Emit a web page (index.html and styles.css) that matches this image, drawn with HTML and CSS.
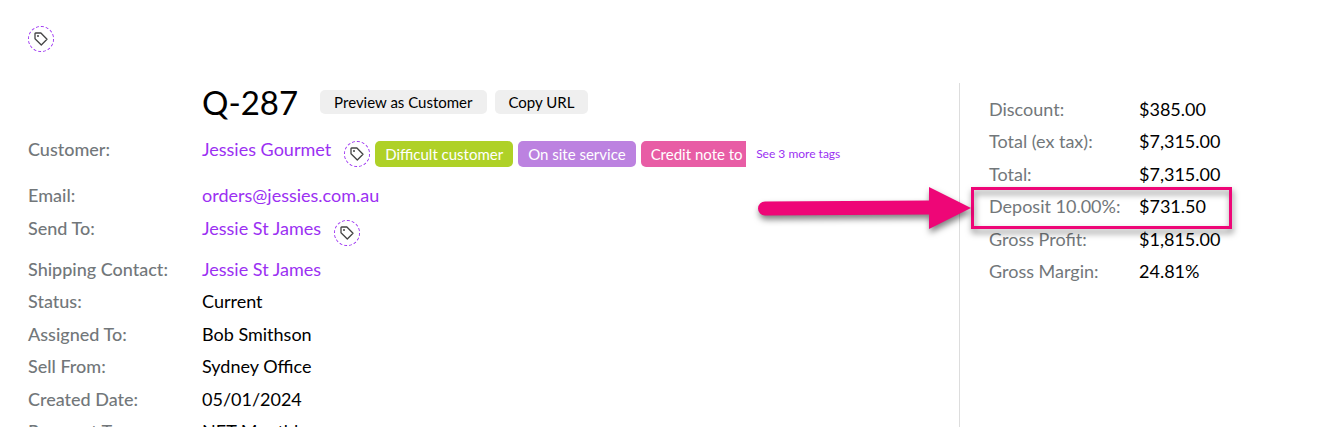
FILE: index.html
```html
<!DOCTYPE html>
<html lang="en">
<head>
<meta charset="utf-8">
<meta name="viewport" content="width=device-width, initial-scale=1">
<title>Quote Q-287</title>
<link rel="stylesheet" href="styles.css">
</head>
<body>
<svg width="0" height="0" class="sprite" aria-hidden="true">
  <symbol id="tag" viewBox="0 0 14 14">
    <path d="M1 1.6V6.8L7.3 13L13 7.3L6.9 1H1.6Q1 1 1 1.6Z" fill="none" stroke="#444" stroke-width="1.3" stroke-linejoin="round"/>
    <circle cx="4" cy="4" r="1" fill="#444"/>
  </symbol>
</svg>
<header class="toolbar">
  <button class="tag-button" type="button" aria-label="Add tag"><svg class="tag-icon"><use href="#tag"/></svg></button>
</header>
<main class="quote">
  <section class="details">
    <div class="heading">
      <h1 class="title">Q-287</h1>
      <button class="action" type="button">Preview as Customer</button>
      <button class="action" type="button">Copy URL</button>
    </div>
    <dl class="fields">
      <div class="field field-customer">
        <dt>Customer:</dt>
        <dd><a href="#">Jessies Gourmet</a>
          <div class="tagging">
            <button class="tag-button" type="button" aria-label="Add customer tag"><svg class="tag-icon"><use href="#tag"/></svg></button>
            <div class="tags">
              <span class="tag tag-green">Difficult customer</span>
              <span class="tag tag-purple">On site service</span>
              <span class="tag tag-pink">Credit note to</span>
            </div>
            <a class="more" href="#">See 3 more tags</a>
          </div>
        </dd>
      </div>
      <div class="field field-tall"><dt>Email:</dt><dd><a href="#">orders@jessies.com.au</a></dd></div>
      <div class="field field-send">
        <dt>Send To:</dt>
        <dd><a href="#">Jessie St James</a>
          <div class="tagging">
            <button class="tag-button" type="button" aria-label="Add contact tag"><svg class="tag-icon"><use href="#tag"/></svg></button>
          </div>
        </dd>
      </div>
      <div class="field"><dt>Shipping Contact:</dt><dd><a href="#">Jessie St James</a></dd></div>
      <div class="field field-tall"><dt>Status:</dt><dd>Current</dd></div>
      <div class="field"><dt>Assigned To:</dt><dd>Bob Smithson</dd></div>
      <div class="field field-tall"><dt>Sell From:</dt><dd>Sydney Office</dd></div>
      <div class="field"><dt>Created Date:</dt><dd>05/01/2024</dd></div>
      <div class="field"><dt>Payment Terms:</dt><dd>NET Monthly</dd></div>
    </dl>
  </section>
  <aside class="summary">
    <dl class="totals">
      <div class="total"><dt>Discount:</dt><dd>$385.00</dd></div>
      <div class="total total-tall"><dt>Total (ex tax):</dt><dd>$7,315.00</dd></div>
      <div class="total"><dt>Total:</dt><dd>$7,315.00</dd></div>
      <div class="total total-tall highlighted"><dt>Deposit 10.00%:</dt><dd>$731.50</dd>
        <span class="frame"></span>
        <svg class="arrow" width="213" height="42" viewBox="0 0 213 42" aria-hidden="true">
          <path d="M7 14.5L171 13.5V0L213 21L171 42V27.5L7 28.5A7 7 0 0 1 7 14.5Z" fill="#ee0677"/>
        </svg>
      </div>
      <div class="total"><dt>Gross Profit:</dt><dd>$1,815.00</dd></div>
      <div class="total"><dt>Gross Margin:</dt><dd>24.81%</dd></div>
    </dl>
  </aside>
</main>
</body>
</html>
```
FILE: styles.css
```css
* { box-sizing: border-box; }

body {
  margin: 0;
  height: 100vh;
  overflow: hidden;
  display: flex;
  flex-direction: column;
  background: #fff;
  color: #000;
  font: 18px/32px Lato, "Liberation Sans", sans-serif;
}

a { color: #9b30f2; text-decoration: none; }
button { font-family: inherit; cursor: pointer; }
dl, dd, h1 { margin: 0; }
.sprite { position: absolute; }

.toolbar { flex: none; padding: 26px 28px 31px; display: flex; }

.tag-button {
  flex: none;
  display: flex;
  align-items: center;
  justify-content: center;
  width: 26px;
  height: 26px;
  padding: 0;
  border: 1px dashed #9b30f2;
  border-radius: 50%;
  background: transparent;
}
.tag-icon { width: 14px; height: 14px; }

.quote {
  flex: 1;
  min-height: 0;
  display: grid;
  grid-template-columns: minmax(0, 1fr) 369px;
}

.details { padding-left: 28px; }
.heading {
  display: flex;
  align-items: center;
  gap: 8px;
  padding-left: 174px;
  height: 38px;
  margin-bottom: 12px;
}
.title { font-size: 33px; font-weight: 400; line-height: 38px; margin-right: 14px; }
.action {
  height: 24px;
  padding: 0 14px;
  border: 0;
  border-radius: 5px;
  background: #efefef;
  color: #000;
  font-size: 15px;
  line-height: 24px;
}

.field { display: grid; grid-template-columns: 174px minmax(0, 1fr); height: 32px; }
.field-tall { height: 33px; }
.field-customer { height: 46px; }
.field-send { height: 41px; }
.field dt { color: #72777a; font-weight: 500; }
.field dd { display: flex; align-items: flex-start; gap: 13px; white-space: nowrap; }

.tagging { display: flex; align-items: center; gap: 5px; padding-top: 8px; }
.tags { display: flex; gap: 5px; width: 371px; overflow: hidden; }
.tag {
  flex: none;
  height: 26px;
  padding: 0 10px;
  border-radius: 5px;
  color: #fff;
  font-size: 15px;
  line-height: 26px;
}
.tag-green { background: #afd127; }
.tag-purple { background: #bc82e0; }
.tag-pink { background: #e85da5; }
.more { font-size: 12px; line-height: 26px; padding-left: 5px; }

.summary { border-left: 1px solid #ddd; padding: 10px 0 0 29px; }
.total { display: grid; grid-template-columns: 150px 1fr; height: 32px; }
.total-tall { height: 33px; }
.total dt { color: #72777a; }

.highlighted { position: relative; }
.frame {
  position: absolute;
  left: -18px;
  top: -3px;
  width: 261px;
  height: 42px;
  border: 3px solid #ee0677;
  filter: drop-shadow(1px 4px 3px rgba(0, 0, 0, .5));
}
.arrow {
  position: absolute;
  right: 100%;
  margin-right: 18px;
  top: -3px;
  overflow: visible;
  filter: drop-shadow(1px 4px 3px rgba(0, 0, 0, .5));
}
```
